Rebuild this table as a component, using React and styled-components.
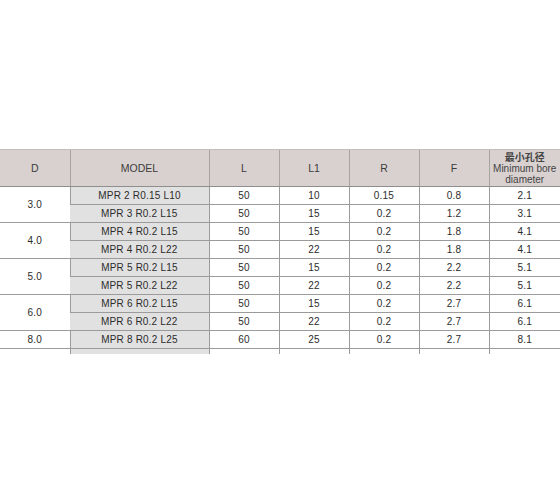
import styled, { createGlobalStyle } from 'styled-components';

const GlobalStyle = createGlobalStyle`
    html, body {
        margin: 0;
        padding: 0;
        background: #fff;
    }
    body {
        font-family: "Liberation Sans", Arial, sans-serif;
    }
`;

const rows = [
    { d: '3.0', span: 2, model: 'MPR 2 R0.15 L10', l: 50, l1: 10, r: '0.15', f: '0.8', min: '2.1' },
    { model: 'MPR 3 R0.2 L15', l: 50, l1: 15, r: '0.2', f: '1.2', min: '3.1' },
    { d: '4.0', span: 2, model: 'MPR 4 R0.2 L15', l: 50, l1: 15, r: '0.2', f: '1.8', min: '4.1' },
    { model: 'MPR 4 R0.2 L22', l: 50, l1: 22, r: '0.2', f: '1.8', min: '4.1' },
    { d: '5.0', span: 2, model: 'MPR 5 R0.2 L15', l: 50, l1: 15, r: '0.2', f: '2.2', min: '5.1' },
    { model: 'MPR 5 R0.2 L22', l: 50, l1: 22, r: '0.2', f: '2.2', min: '5.1' },
    { d: '6.0', span: 2, model: 'MPR 6 R0.2 L15', l: 50, l1: 15, r: '0.2', f: '2.7', min: '6.1' },
    { model: 'MPR 6 R0.2 L22', l: 50, l1: 22, r: '0.2', f: '2.7', min: '6.1' },
    { d: '8.0', span: 1, model: 'MPR 8 R0.2 L25', l: 60, l1: 25, r: '0.2', f: '2.7', min: '8.1' },
];

const widths = [70, 139, 70, 70, 70, 70, 71];

const App = () => {
    return (
        <Page>
            <GlobalStyle />
            <Table>
                <colgroup>
                    {widths.map((w, i) => <col key={i} style={{ width: w }} />)}
                </colgroup>
                <thead>
                    <tr>
                        <Th>D</Th>
                        <Th>MODEL</Th>
                        <Th>L</Th>
                        <Th>L1</Th>
                        <Th>R</Th>
                        <Th>F</Th>
                        <Th>
                            <Cn>最小孔径</Cn>
                            <Small>Minimum bore<br />diameter</Small>
                        </Th>
                    </tr>
                </thead>
                <tbody>
                    {rows.map((row, i) => (
                        <tr key={i}>
                            {row.d && <Td rowSpan={row.span}>{row.d}</Td>}
                            <Td $gray>{row.model}</Td>
                            <Td>{row.l}</Td>
                            <Td>{row.l1}</Td>
                            <Td>{row.r}</Td>
                            <Td>{row.f}</Td>
                            <Td>{row.min}</Td>
                        </tr>
                    ))}
                    <tr>
                        <StubTd />
                        <StubTd $gray />
                        <StubTd />
                        <StubTd />
                        <StubTd />
                        <StubTd />
                        <StubTd />
                    </tr>
                </tbody>
            </Table>
        </Page>
    );
};

export default App;

const Page = styled.div`
    width: 560px;
    height: 504px;
    padding-top: 149px;
    box-sizing: border-box;
    overflow: hidden;
`;

const Table = styled.table`
    width: 560px;
    table-layout: fixed;
    border-collapse: collapse;
    color: #3a3a3a;
`;

const Th = styled.th`
    height: 36px;
    padding: 0;
    background: #d9d1d0;
    border-top: 1px solid #c4bebd;
    border-bottom: 1px solid #8e8e8e;
    border-left: 1px solid #a9a3a2;
    font-size: 10.5px;
    font-weight: normal;
    color: #3c3c3c;
    text-align: center;
    vertical-align: middle;
    line-height: 1;

    &:first-child {
        border-left: none;
    }
`;

const Cn = styled.div`
    font-family: "Noto Sans CJK SC", sans-serif;
    font-size: 10px;
    font-weight: bold;
    color: #444;
    line-height: 12px;
`;

const Small = styled.div`
    font-size: 10px;
    line-height: 11px;
    color: #444;
`;

const Td = styled.td`
    height: 17px;
    padding: 0;
    font-size: 10px;
    font-weight: normal;
    letter-spacing: 0.2px;
    color: #2c2c2c;
    text-align: center;
    vertical-align: middle;
    background: ${props => props.$gray ? '#e1e1e1' : '#fff'};
    border-bottom: 1px solid #9b9b9b;
    border-left: 1px solid #9b9b9b;
    line-height: 1;

    &:first-child {
        border-left: none;
    }
`;

const StubTd = styled.td`
    height: 5px;
    padding: 0;
    background: ${props => props.$gray ? '#e1e1e1' : '#fff'};
    border-left: 1px solid #9b9b9b;

    &:first-child {
        border-left: none;
    }
`;
